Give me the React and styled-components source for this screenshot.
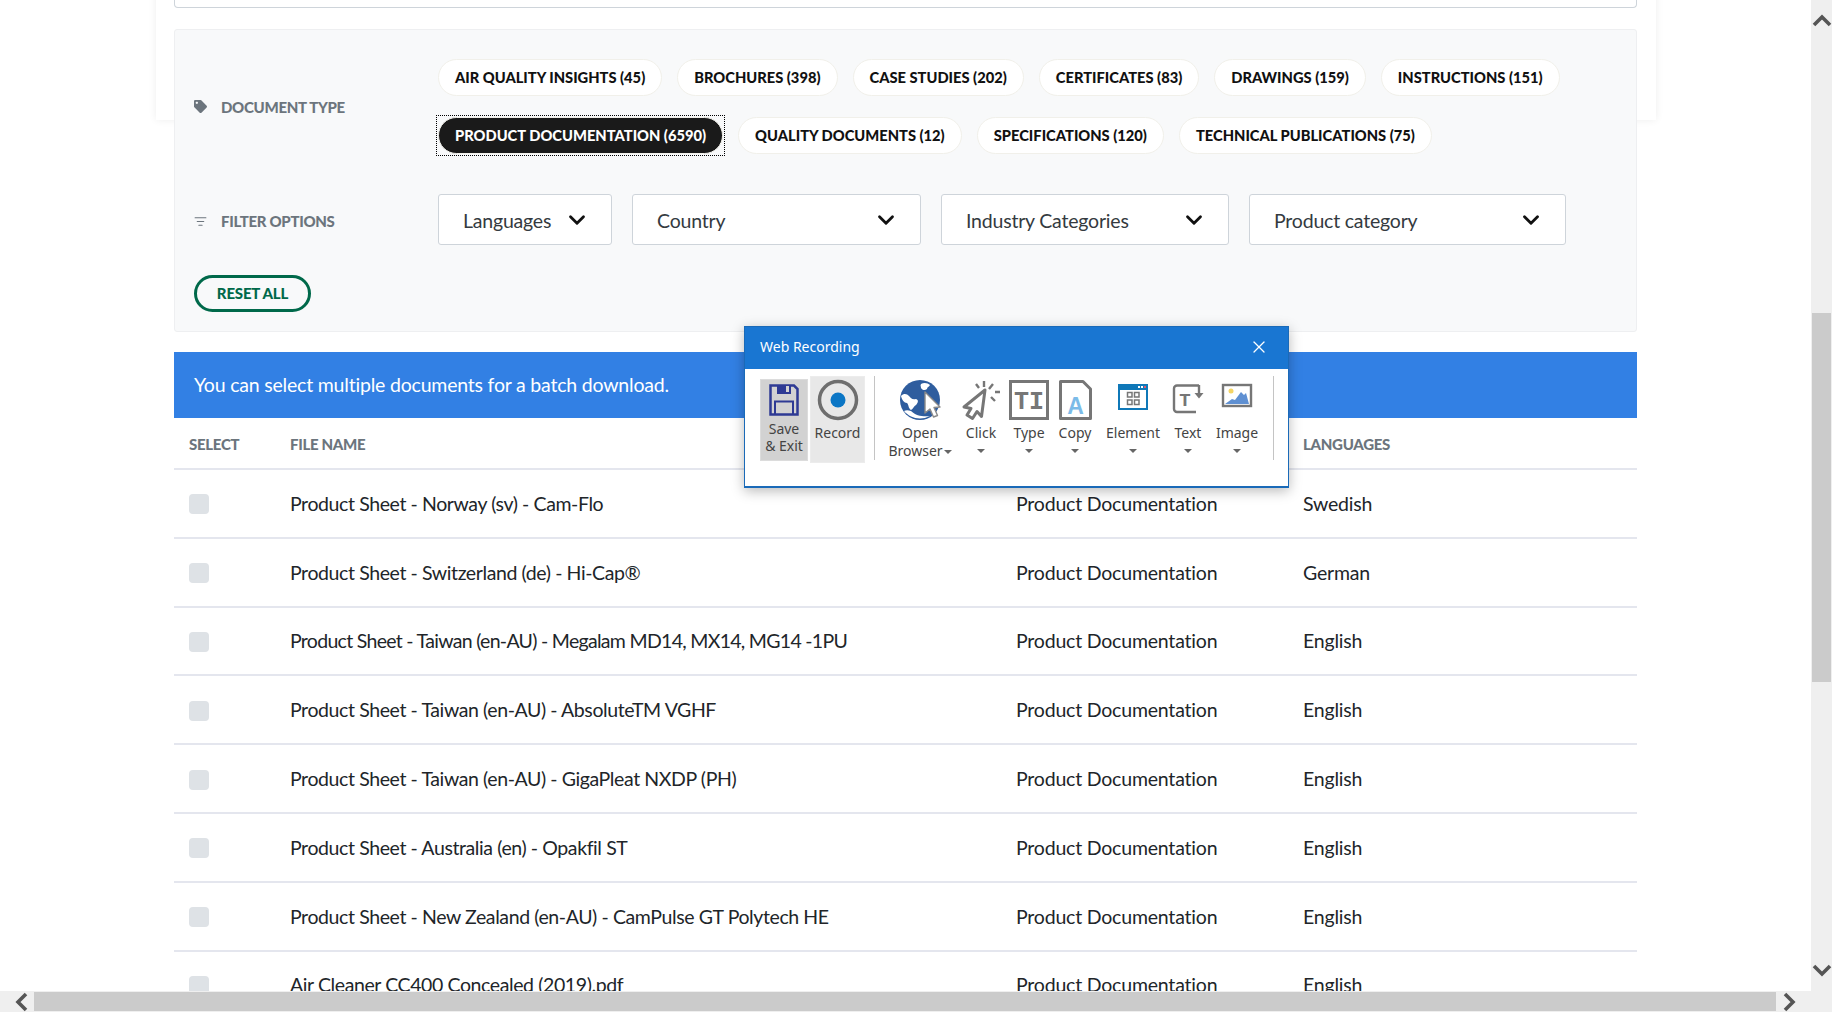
import React from 'react';
import styled, { createGlobalStyle } from 'styled-components';
import { ChevronDown, ListFilter, X } from 'lucide-react';
import { FaTag } from 'react-icons/fa';

const GlobalStyle = createGlobalStyle`
    html, body {
        margin: 0;
        padding: 0;
        height: 100%;
        overflow: hidden;
        background: #fff;
    }
    * {
        box-sizing: border-box;
    }
`;

const PILLS_TOP = [
    'AIR QUALITY INSIGHTS (45)',
    'BROCHURES (398)',
    'CASE STUDIES (202)',
    'CERTIFICATES (83)',
    'DRAWINGS (159)',
    'INSTRUCTIONS (151)',
];

const PILLS_BOTTOM = [
    'QUALITY DOCUMENTS (12)',
    'SPECIFICATIONS (120)',
    'TECHNICAL PUBLICATIONS (75)',
];

const FILTERS = [
    { label: 'Languages', width: 174 },
    { label: 'Country', width: 289 },
    { label: 'Industry Categories', width: 288 },
    { label: 'Product category', width: 317 },
];

const DOCS = [
    { name: 'Product Sheet - Norway (sv) - Cam-Flo', language: 'Swedish' },
    { name: 'Product Sheet - Switzerland (de) - Hi-Cap®', language: 'German' },
    { name: 'Product Sheet - Taiwan (en-AU) - Megalam MD14, MX14, MG14 -1PU', language: 'English', tight: true },
    { name: 'Product Sheet - Taiwan (en-AU) - AbsoluteTM VGHF', language: 'English' },
    { name: 'Product Sheet - Taiwan (en-AU) - GigaPleat NXDP (PH)', language: 'English' },
    { name: 'Product Sheet - Australia (en) - Opakfil ST', language: 'English' },
    { name: 'Product Sheet - New Zealand (en-AU) - CamPulse GT Polytech HE', language: 'English' },
    { name: 'Air Cleaner CC400 Concealed (2019).pdf', language: 'English' },
];

const SaveIcon = () => (
    <svg width="48" height="41" viewBox="0 0 48 41" fill="none">
        <path d="M10.500 6.500H34l3.500 3.500V35.500H10.500Z" stroke="#2e3a94" strokeWidth="2.500" />
        <rect x="17" y="6" width="14" height="9" fill="#2e3a94" />
        <rect x="26" y="7" width="3" height="6" fill="#d2d2d2" />
        <path d="M15 35V22.500H33V35" stroke="#2e3a94" strokeWidth="2" />
    </svg>
);

const RecordIcon = () => (
    <svg width="48" height="48" viewBox="0 0 48 48" fill="none">
        <circle cx="24" cy="24" r="18.500" stroke="#6e6e6e" strokeWidth="3.500" />
        <circle cx="24" cy="24" r="7.500" fill="#0b76c5" />
    </svg>
);

const GlobeIcon = () => (
    <svg width="48" height="48" viewBox="0 0 48 48" fill="none">
        <circle cx="24" cy="24" r="20" fill="#2f5d9e" />
        <path d="M5 20c3-3 6-2 8 0s3 4 7 3c3 1 2 4 0 6-2 1-3 4-5 5-3-2-2-5-4-7-3 0-5-3-6-7Z" fill="#fff" />
        <path d="M25 8c3-2 7-1 9 1-1 2-3 2-3 4-2 2-5 1-6-1 0-2-1-2 0-4Z" fill="#fff" />
        <path d="M8 35c6 7 16 10 26 5-6 1-14 0-19-5-3-1-5-1-7 0Z" fill="#fff" />
        <path d="M29 16l15 15-6 .500 3.500 8-4 1.500-3.500-8-5 4Z" fill="#fff" stroke="#8a8a8a" strokeWidth="1.400" strokeLinejoin="round" />
    </svg>
);

const ClickIcon = () => (
    <svg width="48" height="48" viewBox="0 0 48 48" fill="none">
        <path d="M28 14 7 31l7 1.500-4 6.500 5.500 3.500 4.500-7 4.500 5Z" stroke="#767676" strokeWidth="3" strokeLinejoin="round" />
        <path d="M27 5v6M36 8l-4 5M38 16h5M34 21l4 4M19 8l3 4" stroke="#767676" strokeWidth="2.400" />
    </svg>
);

const TypeIcon = () => (
    <svg width="48" height="48" viewBox="0 0 48 48" fill="none">
        <rect x="5.500" y="5.500" width="37" height="37" stroke="#767676" strokeWidth="3" />
        <text x="24" y="33" textAnchor="middle" fontFamily="Liberation Mono, monospace" fontWeight="700" fontSize="25" fill="#767676">TI</text>
    </svg>
);

const CopyIcon = () => (
    <svg width="48" height="48" viewBox="0 0 48 48" fill="none">
        <path d="M9.500 5.500H32l7.500 7.500V42.500H9.500Z" stroke="#767676" strokeWidth="3" strokeLinejoin="round" />
        <text x="24.500" y="38" textAnchor="middle" fontFamily="Liberation Sans, sans-serif" fontWeight="700" fontSize="23" fill="#7bbbe8">A</text>
    </svg>
);

const ElementIcon = () => (
    <svg width="48" height="48" viewBox="0 0 48 48" fill="none">
        <rect x="9" y="8" width="30" height="26" fill="#0f78b8" />
        <rect x="11" y="14" width="26" height="18" fill="#fff" />
        <rect x="29" y="10" width="2" height="2" fill="#fff" />
        <rect x="32" y="10" width="2" height="2" fill="#fff" />
        <rect x="35" y="10" width="2" height="2" fill="#e4566b" />
        <path d="M18.500 16.500h4.500v4.500h-4.500ZM25.500 16.500h4.500v4.500h-4.500ZM18.500 24h4.500v4.500h-4.500ZM25.500 24h4.500v4.500h-4.500Z" stroke="#777" strokeWidth="1.500" />
    </svg>
);

const TextIcon = () => (
    <svg width="48" height="48" viewBox="0 0 48 48" fill="none">
        <path d="M35 9.500H13a3 3 0 0 0-3 3V33a3 3 0 0 0 3 3h19" stroke="#767676" strokeWidth="2.400" />
        <path d="M35 9v10" stroke="#767676" strokeWidth="2.400" />
        <path d="M30.500 17h9L35 22.500Z" fill="#767676" />
        <text x="21" y="30" textAnchor="middle" fontFamily="Liberation Mono, monospace" fontWeight="700" fontSize="19" fill="#767676">T</text>
    </svg>
);

const ImageIcon = () => (
    <svg width="48" height="48" viewBox="0 0 48 48" fill="none">
        <rect x="10" y="9" width="28" height="21" stroke="#767676" strokeWidth="2.400" />
        <circle cx="18" cy="15" r="2.500" fill="#f5d565" />
        <path d="M12 28l7-5 3 1 6-8 3 3 2-2 3 11Z" fill="#5f90d2" />
    </svg>
);

const ScrollArrow = ({ turn }) => (
    <svg width="20" height="20" viewBox="0 0 20 20" fill="none" style={{ transform: `rotate(${turn}deg)` }}>
        <path d="M2 14 10 6l8 8" stroke="#555" strokeWidth="3.600" />
    </svg>
);

const TOOLS = [
    { label: 'Click', Icon: ClickIcon, width: 52 },
    { label: 'Type', Icon: TypeIcon, width: 44 },
    { label: 'Copy', Icon: CopyIcon, width: 48 },
    { label: 'Element', Icon: ElementIcon, width: 68 },
    { label: 'Text', Icon: TextIcon, width: 42 },
    { label: 'Image', Icon: ImageIcon, width: 56 },
];

const App = () => {
    return (
        <Screen>
            <GlobalStyle />
            <TopArea>
                <Viewport>
                    <CardShadow />
                    <Main>
                        <TopBox />
                        <FilterPanel>
                            <FilterRow>
                                <RowLabel>
                                    <FaTag size={13} />
                                    DOCUMENT TYPE
                                </RowLabel>
                                <PillColumn>
                                    <PillRow>
                                        {PILLS_TOP.map((pill) => <Pill key={pill}>{pill}</Pill>)}
                                    </PillRow>
                                    <PillRow>
                                        <ActivePill>PRODUCT DOCUMENTATION (6590)</ActivePill>
                                        {PILLS_BOTTOM.map((pill) => <Pill key={pill}>{pill}</Pill>)}
                                    </PillRow>
                                </PillColumn>
                            </FilterRow>
                            <OptionsRow>
                                <OptionsLabel>
                                    <ListFilter size={13} strokeWidth={2} />
                                    FILTER OPTIONS
                                </OptionsLabel>
                                <DropdownRow>
                                    {FILTERS.map((filter) => (
                                        <Dropdown key={filter.label} $width={filter.width}>
                                            <span>{filter.label}</span>
                                            <ChevronDown size={26} strokeWidth={2.600} color="#111" />
                                        </Dropdown>
                                    ))}
                                </DropdownRow>
                            </OptionsRow>
                            <ResetButton>RESET ALL</ResetButton>
                        </FilterPanel>
                        <InfoBar>You can select multiple documents for a batch download.</InfoBar>
                        <HeadRow>
                            <HeadCell>SELECT</HeadCell>
                            <HeadCell>FILE NAME</HeadCell>
                            <HeadCell />
                            <HeadCell>LANGUAGES</HeadCell>
                        </HeadRow>
                        {DOCS.map((doc) => (
                            <DocRow key={doc.name}>
                                <Checkbox />
                                <FileName $tight={doc.tight}>{doc.name}</FileName>
                                <span>Product Documentation</span>
                                <span>{doc.language}</span>
                            </DocRow>
                        ))}
                    </Main>
                    <RecorderWindow>
                        <RecorderTitle>
                            Web Recording
                            <X size={20} strokeWidth={1.500} color="#fff" />
                        </RecorderTitle>
                        <Ribbon>
                            <SaveTool>
                                <SaveIcon />
                                <span>Save</span>
                                <span>&amp; Exit</span>
                            </SaveTool>
                            <RecordTool>
                                <RecordIcon />
                                <span>Record</span>
                            </RecordTool>
                            <RibbonDivider />
                            <ToolGroup>
                                <Tool $width={70}>
                                    <GlobeIcon />
                                    <span>Open</span>
                                    <span>Browser<InlineCaret /></span>
                                </Tool>
                                {TOOLS.map(({ label, Icon, width }) => (
                                    <Tool key={label} $width={width}>
                                        <Icon />
                                        <span>{label}</span>
                                        <CaretSlot><Caret /></CaretSlot>
                                    </Tool>
                                ))}
                            </ToolGroup>
                            <RibbonDivider />
                        </Ribbon>
                    </RecorderWindow>
                </Viewport>
                <VerticalBar>
                    <ArrowButton $size={42}><ScrollArrow turn={0} /></ArrowButton>
                    <VerticalThumb />
                    <Spacer />
                    <ArrowButton $size={43}><ScrollArrow turn={180} /></ArrowButton>
                </VerticalBar>
            </TopArea>
            <HorizontalBar>
                <SideArrow $width={34}><ScrollArrow turn={270} /></SideArrow>
                <HorizontalThumb />
                <SideArrow $width={25}><ScrollArrow turn={90} /></SideArrow>
                <Spacer />
            </HorizontalBar>
        </Screen>
    );
};

export default App;

// STYLED COMPONENTS BELOW:

const Screen = styled.div`
    display: flex;
    flex-direction: column;
    width: 1832px;
    height: 1012px;
    overflow: hidden;
    font-family: "Lato", "Liberation Sans", sans-serif;
    color: #212529;
`;

const TopArea = styled.div`
    display: flex;
    height: 991px;
`;

const Viewport = styled.div`
    position: relative;
    width: 1811px;
    height: 991px;
    overflow: hidden;
    padding-left: 174px;
`;

const CardShadow = styled.div`
    position: absolute;
    left: 156px;
    top: -20px;
    width: 1500px;
    height: 140px;
    box-shadow: 0 0 8px rgba(0, 0, 0, 0.07);
`;

const Main = styled.main`
    position: relative;
    width: 1463px;
`;

const TopBox = styled.div`
    height: 8px;
    border: 1px solid #ced4da;
    border-top: 0;
    border-radius: 0 0 4px 4px;
`;

const FilterPanel = styled.section`
    margin-top: 21px;
    height: 303px;
    padding: 29px 19px 0;
    background: #f8f9fa;
    border: 1px solid #eeeff1;
    border-radius: 3px;
`;

const FilterRow = styled.div`
    display: flex;
    align-items: center;
`;

const OptionsRow = styled(FilterRow)`
    margin-top: 40px;
`;

const RowLabel = styled.div`
    display: flex;
    align-items: center;
    gap: 14px;
    width: 244px;
    font-size: 15px;
    font-weight: 900;
    letter-spacing: -0.3px;
    color: #6c757d;

    svg {
        flex: none;
    }
`;

const OptionsLabel = styled(RowLabel)`
    padding-top: 3px;
`;

const PillColumn = styled.div`
    display: flex;
    flex-direction: column;
    gap: 21px;
`;

const PillRow = styled.div`
    display: flex;
    gap: 15px;
`;

const Pill = styled.div`
    position: relative;
    height: 37px;
    padding: 0 16px 2px;
    display: flex;
    align-items: center;
    background: #fff;
    border: 1px solid #f1f0ea;
    border-radius: 19px;
    font-size: 14.700px;
    font-weight: 900;
    color: #111;
    white-space: nowrap;
`;

const ActivePill = styled(Pill)`
    background: #1a1a1a;
    color: #fff;

    &::after {
        content: '';
        position: absolute;
        inset: -3px;
        border: 1px dotted #000;
    }
`;

const DropdownRow = styled.div`
    display: flex;
    gap: 20px;
`;

const Dropdown = styled.div`
    display: flex;
    align-items: center;
    justify-content: space-between;
    width: ${(props) => props.$width}px;
    height: 51px;
    padding: 0 21px 0 24px;
    background: #fff;
    border: 1px solid #ced4da;
    border-radius: 3px;
    font-size: 19.500px;
    letter-spacing: -0.2px;
    color: #343a40;

    span {
        padding-top: 2px;
    }
`;

const ResetButton = styled.div`
    display: flex;
    align-items: center;
    justify-content: center;
    width: 117px;
    height: 37px;
    margin-top: 30px;
    padding-bottom: 1px;
    border: 3px solid #00694a;
    border-radius: 19px;
    font-size: 15px;
    font-weight: 900;
    letter-spacing: -0.2px;
    color: #00694a;
`;

const InfoBar = styled.div`
    display: flex;
    align-items: center;
    height: 66px;
    margin-top: 20px;
    padding: 0 0 2px 20px;
    background: #3280e4;
    font-size: 19.500px;
    letter-spacing: -0.2px;
    color: #fff;
`;

const tableColumns = '101px 726px 287px 1fr';

const HeadRow = styled.div`
    display: grid;
    grid-template-columns: ${tableColumns};
    align-items: center;
    height: 52px;
    padding: 2px 0 0 15px;
    border-bottom: 2px solid #e4e6ee;
`;

const HeadCell = styled.div`
    font-size: 15px;
    font-weight: 900;
    letter-spacing: -0.3px;
    color: #6c757d;
`;

const DocRow = styled.div`
    display: grid;
    grid-template-columns: ${tableColumns};
    align-items: center;
    height: 68.800px;
    padding-left: 15px;
    border-bottom: 2px solid #e4e6ee;
    font-size: 19.500px;
    letter-spacing: -0.2px;
    color: #212529;
`;

const FileName = styled.span`
    letter-spacing: ${(props) => (props.$tight ? '-0.7px' : '-0.4px')};
`;

const Checkbox = styled.div`
    width: 20px;
    height: 20px;
    margin-top: 2px;
    border-radius: 4px;
    background: #dee2e6;
`;

const RecorderWindow = styled.div`
    position: absolute;
    left: 744px;
    top: 326px;
    width: 545px;
    height: 162px;
    background: #fff;
    border: 1px solid #1a6ab8;
    border-bottom-width: 2px;
    box-shadow: 0 3px 12px rgba(0, 0, 0, 0.28);
    font-family: "Noto Sans", "Open Sans", sans-serif;
    font-size: 14px;
    color: #444;
`;

const RecorderTitle = styled.div`
    display: flex;
    align-items: center;
    justify-content: space-between;
    height: 42px;
    padding: 0 19px 3px 15px;
    background: #1976d2;
    color: #fff;
`;

const Ribbon = styled.div`
    display: flex;
    align-items: flex-start;
    padding: 7px 0 0 15px;
`;

const ToolGroup = styled.div`
    display: flex;
    align-items: flex-start;
    flex: none;
    transform: translateX(1px);
`;

const Tool = styled.div`
    display: flex;
    flex-direction: column;
    align-items: center;
    flex: none;
    width: ${(props) => props.$width}px;
    line-height: 18px;
    white-space: nowrap;
`;

const SaveTool = styled(Tool)`
    width: 48px;
    height: 82px;
    margin: 3px 2px 0 0;
    background: #d2d2d2;
    box-shadow: inset 0 0 0 1px #dcdcdc;
    line-height: 17px;
`;

const RecordTool = styled(Tool)`
    width: 55px;
    height: 87px;
    background: #e8e8e8;
    box-shadow: inset 0 0 0 1px #ececec;
`;

const RibbonDivider = styled.div`
    flex: none;
    width: 1px;
    height: 84px;
    margin: 0 9px;
    background: #c4c4c4;
`;

const CaretSlot = styled.span`
    display: flex;
    align-items: center;
    height: 18px;
`;

const Caret = styled.span`
    width: 0;
    height: 0;
    border-left: 4px solid transparent;
    border-right: 4px solid transparent;
    border-top: 4px solid #666;
`;

const InlineCaret = styled(Caret)`
    display: inline-block;
    margin-left: 1px;
    vertical-align: 2px;
`;

const VerticalBar = styled.div`
    display: flex;
    flex-direction: column;
    align-items: center;
    width: 21px;
    background: #efefef;
`;

const ArrowButton = styled.div`
    display: flex;
    align-items: center;
    justify-content: center;
    flex: none;
    height: ${(props) => props.$size}px;
`;

const VerticalThumb = styled.div`
    width: 19px;
    height: 369px;
    margin-top: 271px;
    background: #cbcbcb;
`;

const Spacer = styled.div`
    flex: 1;
`;

const HorizontalBar = styled.div`
    display: flex;
    align-items: center;
    height: 21px;
    background: #efefef;
`;

const SideArrow = styled.div`
    display: flex;
    align-items: center;
    justify-content: flex-end;
    flex: none;
    width: ${(props) => props.$width}px;
    height: 21px;
    padding-right: 2px;
`;

const HorizontalThumb = styled.div`
    width: 1742px;
    height: 19px;
    background: #cbcbcb;
`;
